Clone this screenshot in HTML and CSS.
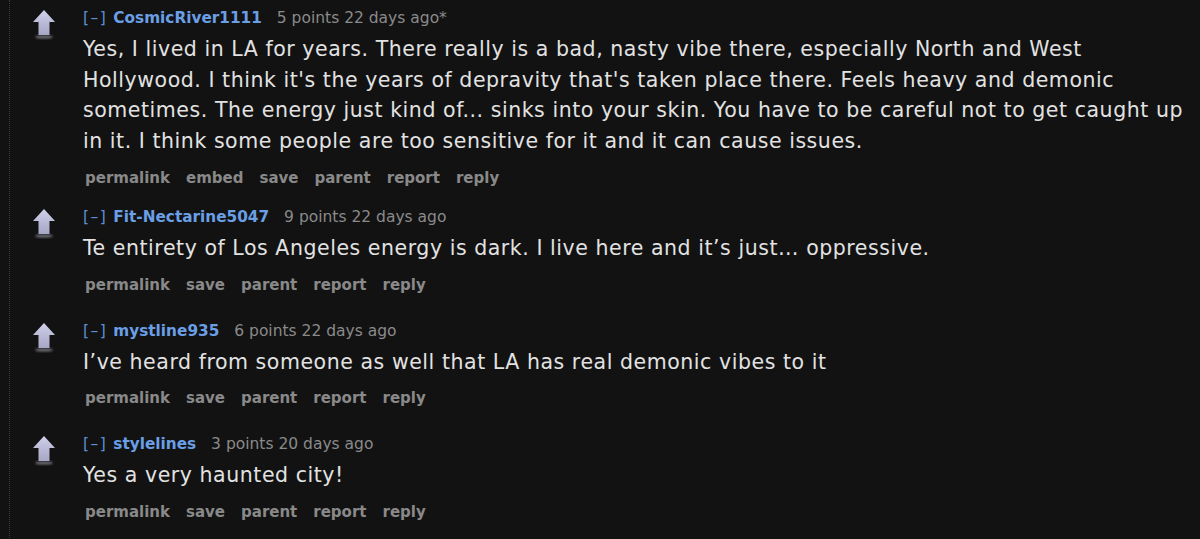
FILE: index.html
```html
<!DOCTYPE html>
<html lang="en">
<head>
<meta charset="utf-8">
<title>Comments</title>
<link rel="stylesheet" href="styles.css">
</head>
<body>
<div class="thread">
  <div class="comment comment--tight">
    <div class="vote">
      <svg class="arrow" width="24" height="31" viewBox="0 0 24 31"><defs><linearGradient id="g1" x1="0" y1="0" x2="0" y2="1"><stop offset="0" stop-color="#d0d0ea"/><stop offset="1" stop-color="#a6a6c6"/></linearGradient><filter id="b1" x="-50%" y="-200%" width="200%" height="500%"><feGaussianBlur stdDeviation="1"/></filter></defs><ellipse cx="12" cy="28" rx="9" ry="1.6" fill="#6e6e78" filter="url(#b1)"/><path d="M12 1 L23 13 L17.5 13 L17.5 26 L6.5 26 L6.5 13 L1 13 Z" fill="url(#g1)"/></svg>
    </div>
    <div class="entry">
      <p class="tagline"><span class="expand">[–]</span> <span class="author">CosmicRiver1111</span> <span class="score">5 points 22 days ago*</span></p>
      <p class="body">Yes, I lived in LA for years. There really is a bad, nasty vibe there, especially North and West Hollywood. I think it's the years of depravity that's taken place there. Feels heavy and demonic sometimes. The energy just kind of... sinks into your skin. You have to be careful not to get caught up in it. I think some people are too sensitive for it and it can cause issues.</p>
      <ul class="buttons"><li>permalink</li><li>embed</li><li>save</li><li>parent</li><li>report</li><li>reply</li></ul>
    </div>
  </div>
  <div class="comment">
    <div class="vote">
      <svg class="arrow" width="24" height="31" viewBox="0 0 24 31"><defs><linearGradient id="g2" x1="0" y1="0" x2="0" y2="1"><stop offset="0" stop-color="#d0d0ea"/><stop offset="1" stop-color="#a6a6c6"/></linearGradient><filter id="b2" x="-50%" y="-200%" width="200%" height="500%"><feGaussianBlur stdDeviation="1"/></filter></defs><ellipse cx="12" cy="28" rx="9" ry="1.6" fill="#6e6e78" filter="url(#b2)"/><path d="M12 1 L23 13 L17.5 13 L17.5 26 L6.5 26 L6.5 13 L1 13 Z" fill="url(#g2)"/></svg>
    </div>
    <div class="entry">
      <p class="tagline"><span class="expand">[–]</span> <span class="author">Fit-Nectarine5047</span> <span class="score">9 points 22 days ago</span></p>
      <p class="body">Te entirety of Los Angeles energy is dark. I live here and it’s just… oppressive.</p>
      <ul class="buttons"><li>permalink</li><li>save</li><li>parent</li><li>report</li><li>reply</li></ul>
    </div>
  </div>
  <div class="comment">
    <div class="vote">
      <svg class="arrow" width="24" height="31" viewBox="0 0 24 31"><defs><linearGradient id="g3" x1="0" y1="0" x2="0" y2="1"><stop offset="0" stop-color="#d0d0ea"/><stop offset="1" stop-color="#a6a6c6"/></linearGradient><filter id="b3" x="-50%" y="-200%" width="200%" height="500%"><feGaussianBlur stdDeviation="1"/></filter></defs><ellipse cx="12" cy="28" rx="9" ry="1.6" fill="#6e6e78" filter="url(#b3)"/><path d="M12 1 L23 13 L17.5 13 L17.5 26 L6.5 26 L6.5 13 L1 13 Z" fill="url(#g3)"/></svg>
    </div>
    <div class="entry">
      <p class="tagline"><span class="expand">[–]</span> <span class="author">mystline935</span> <span class="score">6 points 22 days ago</span></p>
      <p class="body">I’ve heard from someone as well that LA has real demonic vibes to it</p>
      <ul class="buttons"><li>permalink</li><li>save</li><li>parent</li><li>report</li><li>reply</li></ul>
    </div>
  </div>
  <div class="comment">
    <div class="vote">
      <svg class="arrow" width="24" height="31" viewBox="0 0 24 31"><defs><linearGradient id="g4" x1="0" y1="0" x2="0" y2="1"><stop offset="0" stop-color="#d0d0ea"/><stop offset="1" stop-color="#a6a6c6"/></linearGradient><filter id="b4" x="-50%" y="-200%" width="200%" height="500%"><feGaussianBlur stdDeviation="1"/></filter></defs><ellipse cx="12" cy="28" rx="9" ry="1.6" fill="#6e6e78" filter="url(#b4)"/><path d="M12 1 L23 13 L17.5 13 L17.5 26 L6.5 26 L6.5 13 L1 13 Z" fill="url(#g4)"/></svg>
    </div>
    <div class="entry">
      <p class="tagline"><span class="expand">[–]</span> <span class="author">stylelines</span> <span class="score">3 points 20 days ago</span></p>
      <p class="body">Yes a very haunted city!</p>
      <ul class="buttons"><li>permalink</li><li>save</li><li>parent</li><li>report</li><li>reply</li></ul>
    </div>
  </div>
</div>
</body>
</html>
```

FILE: styles.css
```css
html, body {
  margin: 0;
  padding: 0;
  background: #121212;
  height: 100%;
  overflow: hidden;
}

body {
  font-family: "DejaVu Sans", Verdana, sans-serif;
  color: #dedede;
}

.thread {
  margin-left: 9px;
  border-left: 1px dotted #3a3a3a;
  padding-top: 8px;
  min-height: 100%;
  box-sizing: border-box;
}

.comment {
  display: flex;
  padding-bottom: 26px;
}

.comment--tight {
  padding-bottom: 19px;
}

.vote {
  width: 73px;
  flex: none;
}

.arrow {
  display: block;
  margin: 1px 0 0 22px;
}

.entry {
  flex: 1;
  min-width: 0;
}

.tagline {
  margin: 0;
  font-size: 15.5px;
  line-height: 20px;
  white-space: nowrap;
}

.expand {
  color: #5c8fd6;
  letter-spacing: 1.5px;
  margin-right: 1px;
}

.author {
  color: #6a9fe6;
  font-weight: bold;
  font-size: 15.3px;
  margin-right: 10px;
}

.score {
  color: #8a8a8a;
}

.body {
  margin: 6px 0 0;
  font-size: 20.5px;
  letter-spacing: 0.55px;
  line-height: 30.7px;
  color: #e2e2e2;
}

.buttons {
  list-style: none;
  margin: 11px 0 0;
  padding: 0 0 0 2px;
  display: flex;
  gap: 16px;
  font-size: 15px;
  line-height: 20px;
  font-weight: bold;
  color: #898989;
}
```
